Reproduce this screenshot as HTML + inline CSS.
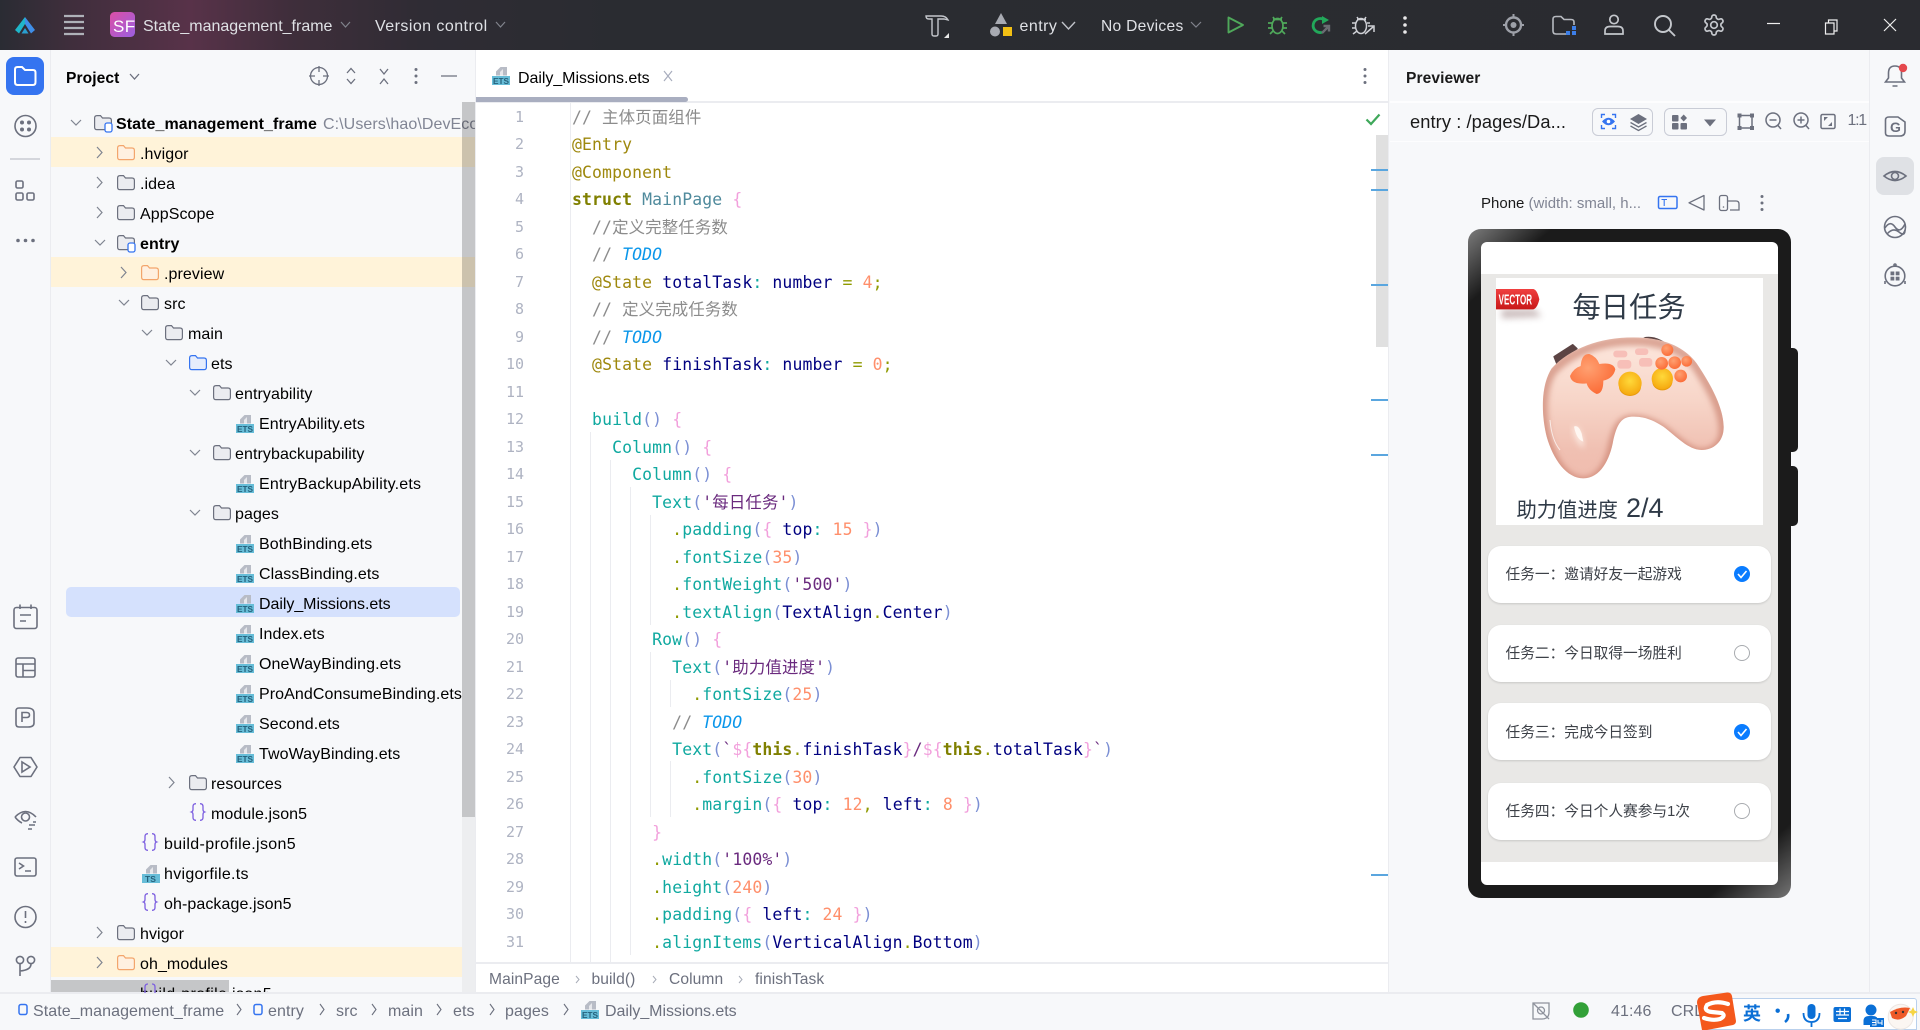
<!DOCTYPE html>
<html><head><meta charset="utf-8"><style>
*{box-sizing:border-box}
html,body{margin:0;padding:0;width:1920px;height:1030px;overflow:hidden;background:#f7f8fa}
body{position:relative;font-family:"Liberation Sans","Noto Sans CJK SC",sans-serif;font-size:16px;color:#000}
.b{position:absolute}
.t{position:absolute;white-space:nowrap;line-height:30px;height:30px;font-size:16px;letter-spacing:.08px;margin-top:2px}
.b .t{margin-top:2.5px}
.code{position:absolute;left:572px;top:103.5px;width:800px;height:859px;overflow:hidden;font-family:"DejaVu Sans Mono","Noto Sans CJK SC",monospace;font-size:16.45px;letter-spacing:.12px}
.code div{height:27.5px;line-height:27.5px;white-space:pre}
.ln{position:absolute;left:490px;top:103.5px;width:34px;text-align:right;font-family:"DejaVu Sans Mono",monospace;font-size:15px;color:#aeb3c2}
.ln div{height:27.5px;line-height:27.5px}
.ig{position:absolute;width:1px;background:#ebecf0}
.c{color:#8c8c8c}.a{color:#9e880d}.k{color:#808000;font-weight:bold}.m{color:#4f8a9c}.w{color:#f2a0dc}.v{color:#000080}.o{color:#8f9a00}.n{color:#ff8f6b}.f{color:#10a9a0}.p{color:#7b8fd4}.s{color:#6a2a7e}.d{color:#0a96ea;font-style:italic}.q{color:#10a9a0}
.card{position:absolute;left:1488px;width:283px;height:57px;background:#fff;border-radius:13px;box-shadow:0 1px 2px rgba(0,0,0,.14)}
.card span{position:absolute;left:17.5px;top:1px;line-height:56px;font-size:14.7px;color:#3d4148;white-space:nowrap}
</style></head><body>

<!-- title bar -->
<div class="b" style="left:0;top:0;width:1920px;height:50px;background:linear-gradient(90deg,#2a2c33 0,#3f2e3c 70px,#583249 190px,#3f2e3b 290px,#2f2c34 420px,#2a2c31 620px,#2a2b30 100%)"></div>
<div class="b" style="left:110px;top:12px;width:25px;height:25px;border-radius:4.5px;background:linear-gradient(135deg,#dc4fa6,#9a5fe0)"></div>
<div class="t" style="left:143px;top:10px;color:#dfe1e5;letter-spacing:0">State_management_frame</div>
<div class="t" style="left:375px;top:10px;color:#dfe1e5;letter-spacing:.45px">Version control</div>
<div class="t" style="left:1019.5px;top:10px;color:#dfe1e5;letter-spacing:.45px">entry</div>
<div class="t" style="left:1101px;top:10px;color:#dfe1e5;font-size:15.6px;letter-spacing:.28px">No Devices</div>
<div class="t" style="left:113px;top:9.5px;color:#fff;font-size:17px;letter-spacing:.4px">SF</div>

<!-- left toolbar -->
<div class="b" style="left:50px;top:50px;width:1px;height:943px;background:#ebecf0"></div>
<div class="b" style="left:6px;top:57px;width:38px;height:38px;background:#3574f0;border-radius:8px"></div>
<div class="b" style="left:10px;top:158px;width:30px;height:1.5px;background:#d4d6dc"></div>

<!-- project panel -->
<div class="t" style="left:66px;top:62px;font-weight:bold;font-size:15.6px">Project</div>

<div class="b" style="left:51px;top:137px;width:424px;height:30px;background:#fff3d9"></div>
<div class="b" style="left:51px;top:257px;width:424px;height:30px;background:#fff3d9"></div>
<div class="b" style="left:51px;top:947px;width:424px;height:30px;background:#fff3d9"></div>
<div class="b" style="left:66px;top:587px;width:394px;height:30px;background:#d5e1fd;border-radius:5px"></div>

<div class="b" style="left:51px;top:107px;width:424px;height:886px;overflow:hidden">
<div class="t" style="left:65px;top:0;font-weight:bold;font-size:16px">State_management_frame</div>
<div class="t" style="left:272px;top:0;color:#818594;font-size:16px">C:\Users\hao\DevEco</div>
<div class="t" style="left:89px;top:30px">.hvigor</div>
<div class="t" style="left:89px;top:60px">.idea</div>
<div class="t" style="left:89px;top:90px">AppScope</div>
<div class="t" style="left:89px;top:120px;font-weight:bold">entry</div>
<div class="t" style="left:113px;top:150px">.preview</div>
<div class="t" style="left:113px;top:180px">src</div>
<div class="t" style="left:137px;top:210px">main</div>
<div class="t" style="left:160px;top:240px">ets</div>
<div class="t" style="left:184px;top:270px">entryability</div>
<div class="t" style="left:208px;top:300px">EntryAbility.ets</div>
<div class="t" style="left:184px;top:330px">entrybackupability</div>
<div class="t" style="left:208px;top:360px;letter-spacing:.19px">EntryBackupAbility.ets</div>
<div class="t" style="left:184px;top:390px">pages</div>
<div class="t" style="left:208px;top:420px">BothBinding.ets</div>
<div class="t" style="left:208px;top:450px">ClassBinding.ets</div>
<div class="t" style="left:208px;top:480px;letter-spacing:-.05px">Daily_Missions.ets</div>
<div class="t" style="left:208px;top:510px">Index.ets</div>
<div class="t" style="left:208px;top:540px">OneWayBinding.ets</div>
<div class="t" style="left:208px;top:570px">ProAndConsumeBinding.ets</div>
<div class="t" style="left:208px;top:600px">Second.ets</div>
<div class="t" style="left:208px;top:630px">TwoWayBinding.ets</div>
<div class="t" style="left:160px;top:660px">resources</div>
<div class="t" style="left:160px;top:690px">module.json5</div>
<div class="t" style="left:113px;top:720px;letter-spacing:.35px">build-profile.json5</div>
<div class="t" style="left:113px;top:750px;letter-spacing:.3px">hvigorfile.ts</div>
<div class="t" style="left:113px;top:780px">oh-package.json5</div>
<div class="t" style="left:89px;top:810px">hvigor</div>
<div class="t" style="left:89px;top:840px">oh_modules</div>
<div class="t" style="left:89px;top:870px;letter-spacing:.35px">build-profile.json5</div>
</div>
<div class="b" style="left:462px;top:102px;width:13px;height:715px;background:rgba(0,0,0,.2)"></div>
<div class="b" style="left:462px;top:817px;width:13px;height:176px;background:#edeef0"></div>
<div class="b" style="left:51px;top:980px;width:178px;height:13px;background:rgba(0,0,0,.2)"></div>

<!-- editor -->
<div class="b" style="left:475px;top:50px;width:914px;height:943px;background:#fff;border-left:1px solid #ebecf0;border-right:1px solid #ebecf0"></div>
<div class="b" style="left:476px;top:101px;width:912px;height:1.5px;background:#ebecf0"></div>
<div class="b" style="left:476px;top:97px;width:212px;height:5px;background:#a9aec0;border-radius:0 3px 3px 0"></div>
<div class="t" style="left:518px;top:62px;color:#000;letter-spacing:-.05px">Daily_Missions.ets</div>

<div class="ig" style="left:570px;top:103px;height:859px"></div>
<div class="ig" style="left:590px;top:432px;height:530px"></div>
<div class="ig" style="left:610px;top:460px;height:502px"></div>
<div class="ig" style="left:630px;top:487px;height:468px"></div>
<div class="ig" style="left:650px;top:515px;height:110px"></div>
<div class="ig" style="left:650px;top:652px;height:165px"></div>
<div class="ig" style="left:670px;top:680px;height:27px"></div>
<div class="ig" style="left:670px;top:761px;height:56px"></div>

<div class="ln"><div>1</div><div>2</div><div>3</div><div>4</div><div>5</div><div>6</div><div>7</div><div>8</div><div>9</div><div>10</div><div>11</div><div>12</div><div>13</div><div>14</div><div>15</div><div>16</div><div>17</div><div>18</div><div>19</div><div>20</div><div>21</div><div>22</div><div>23</div><div>24</div><div>25</div><div>26</div><div>27</div><div>28</div><div>29</div><div>30</div><div>31</div></div>

<div class="code">
<div class="c">// 主体页面组件</div>
<div class="a">@Entry</div>
<div class="a">@Component</div>
<div><span class="k">struct</span> <span class="m">MainPage</span> <span class="w">{</span></div>
<div class="c">  //定义完整任务数</div>
<div>  <span class="c">// </span><span class="d">TODO</span></div>
<div>  <span class="a">@State</span> <span class="v">totalTask</span><span class="q">:</span> <span class="v">number</span> <span class="o">=</span> <span class="n">4</span><span class="o">;</span></div>
<div class="c">  // 定义完成任务数</div>
<div>  <span class="c">// </span><span class="d">TODO</span></div>
<div>  <span class="a">@State</span> <span class="v">finishTask</span><span class="q">:</span> <span class="v">number</span> <span class="o">=</span> <span class="n">0</span><span class="o">;</span></div>
<div></div>
<div>  <span class="f">build</span><span class="p">()</span> <span class="w">{</span></div>
<div>    <span class="f">Column</span><span class="p">()</span> <span class="w">{</span></div>
<div>      <span class="f">Column</span><span class="p">()</span> <span class="w">{</span></div>
<div>        <span class="f">Text</span><span class="p">(</span><span class="s">'每日任务'</span><span class="p">)</span></div>
<div>          <span class="o">.</span><span class="f">padding</span><span class="p">(</span><span class="w">{</span> <span class="v">top</span><span class="q">:</span> <span class="n">15</span> <span class="w">}</span><span class="p">)</span></div>
<div>          <span class="o">.</span><span class="f">fontSize</span><span class="p">(</span><span class="n">35</span><span class="p">)</span></div>
<div>          <span class="o">.</span><span class="f">fontWeight</span><span class="p">(</span><span class="s">'500'</span><span class="p">)</span></div>
<div>          <span class="o">.</span><span class="f">textAlign</span><span class="p">(</span><span class="v">TextAlign</span><span class="o">.</span><span class="v">Center</span><span class="p">)</span></div>
<div>        <span class="f">Row</span><span class="p">()</span> <span class="w">{</span></div>
<div>          <span class="f">Text</span><span class="p">(</span><span class="s">'助力值进度'</span><span class="p">)</span></div>
<div>            <span class="o">.</span><span class="f">fontSize</span><span class="p">(</span><span class="n">25</span><span class="p">)</span></div>
<div>          <span class="c">// </span><span class="d">TODO</span></div>
<div>          <span class="f">Text</span><span class="p">(</span><span class="s">`</span><span class="w">${</span><span class="k">this</span><span class="o">.</span><span class="v">finishTask</span><span class="w">}</span><span class="s">/</span><span class="w">${</span><span class="k">this</span><span class="o">.</span><span class="v">totalTask</span><span class="w">}</span><span class="s">`</span><span class="p">)</span></div>
<div>            <span class="o">.</span><span class="f">fontSize</span><span class="p">(</span><span class="n">30</span><span class="p">)</span></div>
<div>            <span class="o">.</span><span class="f">margin</span><span class="p">(</span><span class="w">{</span> <span class="v">top</span><span class="q">:</span> <span class="n">12</span><span class="o">,</span> <span class="v">left</span><span class="q">:</span> <span class="n">8</span> <span class="w">}</span><span class="p">)</span></div>
<div>        <span class="w">}</span></div>
<div>        <span class="o">.</span><span class="f">width</span><span class="p">(</span><span class="s">'100%'</span><span class="p">)</span></div>
<div>        <span class="o">.</span><span class="f">height</span><span class="p">(</span><span class="n">240</span><span class="p">)</span></div>
<div>        <span class="o">.</span><span class="f">padding</span><span class="p">(</span><span class="w">{</span> <span class="v">left</span><span class="q">:</span> <span class="n">24</span> <span class="w">}</span><span class="p">)</span></div>
<div>        <span class="o">.</span><span class="f">alignItems</span><span class="p">(</span><span class="v">VerticalAlign</span><span class="o">.</span><span class="v">Bottom</span><span class="p">)</span></div>
</div>

<!-- editor scrollbar -->
<div class="b" style="left:1376px;top:135px;width:12px;height:212px;background:#e0e0e0"></div>
<div class="b" style="left:1371px;top:169px;width:17px;height:2px;background:#5aa6df"></div>
<div class="b" style="left:1371px;top:189px;width:17px;height:2px;background:#5aa6df"></div>
<div class="b" style="left:1371px;top:284px;width:17px;height:2px;background:#5aa6df"></div>
<div class="b" style="left:1371px;top:399px;width:17px;height:2px;background:#5aa6df"></div>
<div class="b" style="left:1371px;top:454px;width:17px;height:2px;background:#5aa6df"></div>
<div class="b" style="left:1371px;top:874px;width:17px;height:2px;background:#5aa6df"></div>

<!-- breadcrumb -->
<div class="b" style="left:476px;top:962px;width:912px;height:1.5px;background:#ebecf0"></div>
<div class="t" style="left:489px;top:963px;color:#6c707e;font-size:15.6px">MainPage</div>
<div class="t" style="left:591.5px;top:963px;color:#6c707e;font-size:15.6px">build()</div>
<div class="t" style="left:669px;top:963px;color:#6c707e;font-size:15.6px">Column</div>
<div class="t" style="left:755px;top:963px;color:#6c707e;font-size:15.6px">finishTask</div>

<!-- previewer -->
<div class="t" style="left:1406px;top:62px;font-weight:bold;font-size:15.6px;color:#1a1a1a">Previewer</div>
<div class="b" style="left:1390px;top:101px;width:479px;height:1.5px;background:#fdfdfe"></div>
<div class="b" style="left:1390px;top:140.5px;width:479px;height:1.5px;background:#fdfdfe"></div>
<div class="t" style="left:1410px;top:105px;font-size:18.3px;color:#1a1a1a">entry : /pages/Da...</div>
<div class="b" style="left:1592px;top:108px;width:61px;height:28px;border:1px solid #c9ccd6;border-radius:6px"></div>
<div class="b" style="left:1664px;top:108px;width:63px;height:28px;border:1px solid #c9ccd6;border-radius:6px"></div>
<div class="t" style="left:1847.5px;top:104px;font-size:16px;color:#6c707e;letter-spacing:-1.3px">1:1</div>
<div class="t" style="left:1481px;top:187px;font-size:15px;color:#1a1a1a;letter-spacing:0">Phone <span style="color:#818594">(width: small, h...</span></div>
<div class="b" style="left:1869px;top:50px;width:1px;height:943px;background:#ebecf0"></div>
<div class="b" style="left:1876px;top:157px;width:38px;height:38px;background:#dfe1e5;border-radius:8px"></div>

<!-- phone -->
<div class="b" style="left:1791px;top:348px;width:7px;height:104px;background:#1b1b1b;border-radius:0 5px 5px 0"></div>
<div class="b" style="left:1791px;top:466px;width:7px;height:60px;background:#1b1b1b;border-radius:0 5px 5px 0"></div>
<div class="b" style="left:1468px;top:229px;width:323px;height:669px;border-radius:13px;background:linear-gradient(138deg,#7c7c7c 0,#1b1b1b 56px,#1b1b1b calc(100% - 56px),#747474 100%)"></div>
<div class="b" style="left:1481px;top:242px;width:297px;height:643px;background:#fff;border-radius:6px;overflow:hidden">
  <div class="b" style="left:0;top:32px;width:297px;height:588px;background:#e9e8e6"></div>
  <div class="b" style="left:15px;top:36px;width:267px;height:247px;background:#fff"></div>
</div>
<div class="t" style="left:1572.5px;top:285px;height:40px;line-height:40px;font-size:28.3px;color:#2f3a47;letter-spacing:0">每日任务</div>
<div class="t" style="left:1516.5px;top:493px;height:32px;line-height:32px;font-size:20.3px;color:#2f3a47;letter-spacing:0">助力值进度</div>
<div class="t" style="left:1626px;top:489px;height:34px;line-height:34px;font-size:27px;color:#2f3a47;letter-spacing:0">2/4</div>
<div class="card" style="top:546px"><span>任务一：邀请好友一起游戏</span></div>
<div class="card" style="top:625px"><span>任务二：今日取得一场胜利</span></div>
<div class="card" style="top:703px"><span style="top:2px">任务三：完成今日签到</span></div>
<div class="card" style="top:783px"><span>任务四：今日个人赛参与1次</span></div>

<!-- status bar -->
<div class="b" style="left:0;top:992px;width:1920px;height:1.5px;background:#ebecf0"></div>
<div class="t" style="left:33px;top:995px;color:#6c707e">State_management_frame</div>
<div class="t" style="left:268px;top:995px;color:#6c707e">entry</div>
<div class="t" style="left:336px;top:995px;color:#6c707e">src</div>
<div class="t" style="left:388px;top:995px;color:#6c707e">main</div>
<div class="t" style="left:453px;top:995px;color:#6c707e">ets</div>
<div class="t" style="left:505px;top:995px;color:#6c707e">pages</div>
<div class="t" style="left:605px;top:995px;color:#6c707e;letter-spacing:-.05px">Daily_Missions.ets</div>
<div class="t" style="left:1611px;top:995px;color:#6c707e">41:46</div>
<div class="t" style="left:1671px;top:995px;color:#6c707e">CRL</div>

<!-- sogou -->
<div class="b" style="left:1705px;top:998px;width:212px;height:32px;background:#fff;border:1px solid #b9d0ec;border-radius:3px 3px 0 0"></div>
<div class="t" style="left:1743px;top:997px;color:#0a6fd6;font-weight:bold;font-size:18px;letter-spacing:0;height:28px;line-height:30px">英</div>

<!-- icon layer -->
<svg class="b" style="left:0;top:0;pointer-events:none" width="1920" height="1030" viewBox="0 0 1920 1030" xmlns="http://www.w3.org/2000/svg" fill="none">
<defs>
<g id="fo"><path d="M.6 3Q.6.6 3 .6H6.5L8.5 3H15Q17.4 3 17.4 5.4V12.2Q17.4 14.6 15 14.6H3Q.6 14.6.6 12.2Z" stroke-width="1.2"/></g>
<g id="cr"><path d="M0 0L5 5.5L0 11" stroke="#7f8490" stroke-width="1.2" fill="none"/></g>
<g id="cd"><path d="M0 0L5 5L10 0" stroke="#7f8490" stroke-width="1.2" fill="none"/></g>
<g id="et"><path d="M4 8.5V4.5L8.5 0H15V8.5Z" fill="#b8bcc6"/><path d="M8 8.5V5L11 2V8.5Z" fill="#e6e7eb"/><rect x="0" y="9" width="18" height="9" fill="#67bdd8"/></g>
<g id="js"><path d="M5 .7Q2 .7 2 3.5V6.5Q2 8.5 .5 9Q2 9.5 2 11.5V14.5Q2 17.3 5 17.3M9 .7Q12 .7 12 3.5V6.5Q12 8.5 13.5 9Q12 9.5 12 11.5V14.5Q12 17.3 9 17.3" stroke="#7d5fe0" stroke-width="1.3" fill="none"/></g>
</defs>

<!-- titlebar icons -->
<path d="M25 17L15 30L19 33.500L25 24Z" fill="#1fb6c9"/><path d="M25 17L35 30L31 33.500L25 24Z" fill="#3f8ee8"/><path d="M21.500 33.500H28.500L25 28Z" fill="#2a9fd0"/>
<path d="M64 16H84M64 22H84M64 28H84M64 34H84" stroke="#aeb1b8" stroke-width="2.2"/>
<g stroke="#80838c" stroke-width="1.2"><path d="M341 22L345.5 27L350 22M496 22L500.5 27L505 22"/><path d="M1191 22L1196 27L1201 22"/></g>
<path d="M1062 22L1068.5 29L1075 22" stroke="#c0c3c9" stroke-width="1.4"/>
<path d="M926 16H941Q946 16 948 20L944 19H938V34Q938 36 936 36H934Q932 36 932 34V19H929Q926 19 926 16Z" stroke="#c4c7cc" stroke-width="1.4"/><path d="M949 38V33L944 38Z" fill="#e8e8e8"/>
<path d="M1001 13L1007 24H995Z" fill="#a8abb2"/><circle cx="995" cy="31.5" r="5" fill="#a8abb2"/><rect x="1003" y="27" width="9" height="9" fill="#f2c014"/>
<path d="M1228.5 17.5L1243 25L1228.5 32.5Z" stroke="#4fa85a" stroke-width="1.9" stroke-linejoin="round"/>
<g stroke="#4fa85a" stroke-width="1.7"><ellipse cx="1277.5" cy="26" rx="5.5" ry="7.5"/><path d="M1273 17L1275 20M1282 17L1280 20M1273 19.5H1282M1268 23H1272M1283 23H1287M1268 28H1272M1283 28H1287M1270 34L1273 31M1285 34L1282 31"/></g>
<path d="M1325 20.500A7 7 0 1 0 1322 32.300" stroke="#22a85a" stroke-width="2.800"/><path d="M1322 16L1329 20L1322 24Z" fill="#22a85a"/><path d="M1322 33L1328 27M1323.500 26H1329V31.500" stroke="#6a6c72" stroke-width="2.400"/>
<g stroke="#cfd1d6" stroke-width="1.5"><ellipse cx="1361" cy="26" rx="5.5" ry="7.5"/><path d="M1357 17L1359 20M1366 17L1364 20M1357 19.5H1366M1352 23H1356M1367 23H1370M1352 28H1356M1353 34L1357 31M1365 34L1373 27M1368 26H1374V32"/></g>
<g fill="#e8e8e8"><circle cx="1405" cy="18" r="1.8"/><circle cx="1405" cy="25" r="1.8"/><circle cx="1405" cy="32" r="1.8"/></g>
<circle cx="1513.5" cy="25" r="7.5" stroke="#9da0a8" stroke-width="2.4"/><circle cx="1513.5" cy="25" r="3" fill="#9da0a8"/><path d="M1513.5 14V17M1513.5 33V36M1503 25H1506M1521 25H1524" stroke="#9da0a8" stroke-width="2"/>
<path d="M1566 34H1556Q1553 34 1553 31V19Q1553 16.5 1556 16.5H1561L1564 19.5H1571Q1574 19.5 1574 22V25" stroke="#b7bac0" stroke-width="1.6"/><g fill="#3d7fe8"><rect x="1572" y="26" width="4" height="4"/><rect x="1566" y="31" width="4" height="4"/><rect x="1572" y="31" width="4" height="4"/></g>
<circle cx="1614" cy="19.5" r="4.2" stroke="#c4c7cc" stroke-width="1.7"/><path d="M1605 34V31Q1605 26.5 1610 26.5H1618Q1623 26.5 1623 31V34Z" stroke="#c4c7cc" stroke-width="1.7"/>
<circle cx="1663" cy="24" r="8" stroke="#c4c7cc" stroke-width="1.9"/><path d="M1669 30L1675 36" stroke="#c4c7cc" stroke-width="1.9"/>
<g transform="translate(1702 13)" stroke="#c4c7cc" stroke-width="1.700"><path d="M12.22 2h-.44a2 2 0 0 0-2 2v.18a2 2 0 0 1-1 1.73l-.43.25a2 2 0 0 1-2 0l-.15-.08a2 2 0 0 0-2.73.73l-.22.38a2 2 0 0 0 .73 2.73l.15.1a2 2 0 0 1 1 1.72v.51a2 2 0 0 1-1 1.74l-.15.09a2 2 0 0 0-.73 2.73l.22.38a2 2 0 0 0 2.73.73l.15-.08a2 2 0 0 1 2 0l.43.25a2 2 0 0 1 1 1.73V20a2 2 0 0 0 2 2h.44a2 2 0 0 0 2-2v-.18a2 2 0 0 1 1-1.73l.43-.25a2 2 0 0 1 2 0l.15.08a2 2 0 0 0 2.73-.73l.22-.39a2 2 0 0 0-.73-2.73l-.15-.08a2 2 0 0 1-1-1.74v-.5a2 2 0 0 1 1-1.74l.15-.09a2 2 0 0 0 .73-2.73l-.22-.38a2 2 0 0 0-2.73-.73l-.15.08a2 2 0 0 1-2 0l-.43-.25a2 2 0 0 1-1-1.73V4a2 2 0 0 0-2-2z"/><circle cx="12" cy="12" r="3.300"/></g>
<path d="M1767 23.5H1780" stroke="#eee" stroke-width="1.2"/>
<path d="M1825.5 23H1834V34H1825.5ZM1828.5 23V20H1837V31H1834" stroke="#eee" stroke-width="1.2"/>
<path d="M1884 19L1896 31M1896 19L1884 31" stroke="#eee" stroke-width="1.2"/>

<!-- left bar icons -->
<path d="M15 69.5Q15 67 17.5 67H22L25 70H33Q35.5 70 35.5 72.5V82Q35.5 85 33 85H17.5Q15 85 15 82Z" stroke="#fff" stroke-width="2"/>
<g stroke="#6c707e" stroke-width="1.6">
<circle cx="25.5" cy="126" r="10.5"/>
<rect x="16" y="181" width="7" height="7" rx="1.5"/><rect x="16" y="193" width="7" height="7" rx="1.5"/><rect x="27" y="193" width="7" height="7" rx="1.5"/>
<rect x="14" y="607.5" width="23" height="21" rx="2.5"/><path d="M20 604.5V609M31 604.5V609M20 615H31M20 621H26"/>
<rect x="16" y="658" width="19" height="19" rx="2"/><path d="M16 664H35M23 664V677M23 670.5H35"/>
<path d="M19 708H27Q34 708 34 713V723Q34 727 28 727H19Q16 727 16 724V711Q16 708 19 708Z"/><path d="M22 722V712.5H26.5Q29.5 712.5 29.5 715T26.5 717.5H22"/>
<path d="M20 757.5H31L37 767L31 776.5H20L14 767Z" stroke-linejoin="round"/><path d="M22 762V772L30 767Z"/>
<path d="M15 817Q25.5 806 36 817M15 817Q18 821 22 823M33 822H36M29 825H35M28 829H32"/><circle cx="25.5" cy="817" r="4"/>
<rect x="15" y="858" width="21" height="18" rx="2"/><path d="M19 863L23.5 866L19 869M25 871H31"/>
<circle cx="25.5" cy="917" r="10.5"/><path d="M25.5 911V918M25.5 921V923"/>
<circle cx="20" cy="960" r="3.6"/><circle cx="31" cy="960" r="3.6"/><path d="M20 964V976M31 964Q31 970 20 971"/>
</g>
<g fill="#6c707e"><circle cx="22" cy="122.5" r="2"/><circle cx="29" cy="122.5" r="2"/><circle cx="22" cy="129.5" r="2"/><circle cx="29" cy="129.5" r="2"/><circle cx="18" cy="240.5" r="1.8"/><circle cx="25.5" cy="240.5" r="1.8"/><circle cx="33" cy="240.5" r="1.8"/></g>

<!-- project header icons -->
<g stroke="#6c707e" stroke-width="1.3"><circle cx="319" cy="76" r="8.5"/><path d="M319 66V72M319 80V86M309 76H315M323 76H329"/><path d="M347 73L351 68.500L355 73M347 79L351 83.500L355 79M380 69L384 74L388 69M380 84L384 79L388 84M441 76H457"/><path d="M130 74L134.500 79L139 74"/></g>
<g fill="#6c707e"><circle cx="416" cy="69.500" r="1.500"/><circle cx="416" cy="76" r="1.500"/><circle cx="416" cy="82.500" r="1.500"/></g>

<!-- tree icons -->
<g fill="#ebecf0" stroke="#6c707e">
<use href="#fo" x="94" y="115"/><use href="#fo" x="117" y="175"/><use href="#fo" x="117" y="205"/><use href="#fo" x="117" y="235"/>
<use href="#fo" x="141" y="295"/><use href="#fo" x="165" y="325"/><use href="#fo" x="213" y="385"/><use href="#fo" x="213" y="445"/><use href="#fo" x="213" y="505"/>
<use href="#fo" x="189" y="775"/><use href="#fo" x="117" y="925"/>
</g>
<g fill="#fff0e0" stroke="#f3a56c"><use href="#fo" x="117" y="145"/><use href="#fo" x="141" y="265"/><use href="#fo" x="117" y="955"/></g>
<g fill="#e6edfc" stroke="#3574f0"><use href="#fo" x="189" y="355"/></g>
<g fill="#fff" stroke="#3574f0" stroke-width="1.3"><rect x="105" y="123" width="7" height="9" rx="2"/><rect x="128" y="243" width="7" height="9" rx="2"/></g>
<use href="#cd" x="71" y="120"/><use href="#cd" x="95" y="240"/><use href="#cd" x="119" y="300"/><use href="#cd" x="142" y="330"/><use href="#cd" x="166" y="360"/><use href="#cd" x="190" y="390"/><use href="#cd" x="190" y="450"/><use href="#cd" x="190" y="510"/>
<use href="#cr" x="97" y="147"/><use href="#cr" x="97" y="177"/><use href="#cr" x="97" y="207"/><use href="#cr" x="121" y="267"/><use href="#cr" x="169" y="777"/><use href="#cr" x="97" y="927"/><use href="#cr" x="97" y="957"/>
<g>
<use href="#et" x="236" y="415"/><use href="#et" x="236" y="475"/><use href="#et" x="236" y="535"/><use href="#et" x="236" y="565"/><use href="#et" x="236" y="595"/><use href="#et" x="236" y="625"/><use href="#et" x="236" y="655"/><use href="#et" x="236" y="685"/><use href="#et" x="236" y="715"/><use href="#et" x="236" y="745"/>
<use href="#et" x="142" y="865"/><use href="#et" x="492" y="67"/><use href="#et" x="581" y="1001"/>
</g>
<g font-family="Liberation Sans,sans-serif" font-size="8.500" font-weight="bold" fill="#25607a">
<text x="237" y="432" textLength="16" lengthAdjust="spacingAndGlyphs">ETS</text><text x="237" y="492" textLength="16" lengthAdjust="spacingAndGlyphs">ETS</text><text x="237" y="552" textLength="16" lengthAdjust="spacingAndGlyphs">ETS</text><text x="237" y="582" textLength="16" lengthAdjust="spacingAndGlyphs">ETS</text><text x="237" y="612" textLength="16" lengthAdjust="spacingAndGlyphs">ETS</text><text x="237" y="642" textLength="16" lengthAdjust="spacingAndGlyphs">ETS</text><text x="237" y="672" textLength="16" lengthAdjust="spacingAndGlyphs">ETS</text><text x="237" y="702" textLength="16" lengthAdjust="spacingAndGlyphs">ETS</text><text x="237" y="732" textLength="16" lengthAdjust="spacingAndGlyphs">ETS</text><text x="237" y="762" textLength="16" lengthAdjust="spacingAndGlyphs">ETS</text>
<text x="145" y="882">TS</text><text x="493" y="84" textLength="16" lengthAdjust="spacingAndGlyphs">ETS</text><text x="582" y="1018" textLength="16" lengthAdjust="spacingAndGlyphs">ETS</text>
</g>
<use href="#js" x="191" y="803"/><use href="#js" x="143" y="833"/><use href="#js" x="143" y="893"/>
<g><path d="M148 984Q145 984 145 987V993M152 984Q155 984 155 987V993" stroke="#7d5fe0" stroke-width="1.300"/></g>

<!-- editor icons -->
<path d="M664 71L672 81M672 71L664 81" stroke="#a8adbd" stroke-width="1.2"/>
<g fill="#6c707e"><circle cx="1365" cy="69.500" r="1.500"/><circle cx="1365" cy="76" r="1.500"/><circle cx="1365" cy="82.500" r="1.500"/></g>
<path d="M1366.500 119.500L1371 124L1379.500 114.500" stroke="#3fa85a" stroke-width="2.200"/>
<g stroke="#a8adb8" stroke-width="1"><path d="M576 976L579 979.500L576 983M653 976L656 979.500L653 983M739 976L742 979.500L739 983"/></g>

<!-- previewer icons -->
<g stroke="#3574f0" stroke-width="1.400"><path d="M1601.500 118V114.500H1605M1612 114.500H1615.500V118M1601.500 125V128.500H1605M1612 128.500H1615.500V125"/></g>
<path d="M1602 121.500Q1608.500 114 1615 121.500Q1608.500 129 1602 121.500Z" fill="#3574f0"/><circle cx="1608.500" cy="121.500" r="1.800" fill="#fff"/>
<path d="M1638.500 114L1647 119L1638.500 124L1630 119Z" fill="#6c707e"/><path d="M1630.500 122.500L1638.500 127L1646.500 122.500M1630.500 126L1638.500 130.500L1646.500 126" stroke="#6c707e" stroke-width="1.300"/>
<g fill="#6c707e"><rect x="1672" y="115" width="6.500" height="6.500" rx="1"/><rect x="1672" y="123" width="6.500" height="6.500" rx="1"/><rect x="1680.500" y="123" width="6.500" height="6.500" rx="1"/><path d="M1683.700 114.500L1687 118L1683.700 121.500L1680.400 118Z"/><path d="M1704 119.500H1716L1710 126.500Z"/></g>
<g stroke="#6c707e" stroke-width="1.500"><rect x="1739.500" y="115.500" width="12.500" height="12.500"/><circle cx="1773" cy="120" r="7"/><path d="M1769.500 120H1776.500M1778 125.500L1781 129"/><circle cx="1801" cy="120" r="7"/><path d="M1797.500 120H1804.500M1801 116.500V123.500M1806 125.500L1809 129"/><rect x="1821" y="114.500" width="14" height="14" rx="1.500"/></g>
<g fill="#6c707e"><rect x="1737.500" y="113.500" width="4" height="4"/><rect x="1750" y="113.500" width="4" height="4"/><rect x="1737.500" y="126" width="4" height="4"/><rect x="1750" y="126" width="4" height="4"/><path d="M1824 117H1828L1824 121ZM1832 126H1828L1832 122Z"/></g>
<rect x="1658.500" y="196.500" width="18.500" height="12" rx="1.500" stroke="#3574f0" stroke-width="1.500"/><path d="M1661.500 199.500H1667M1664.200 199.500V206" stroke="#3574f0" stroke-width="1.100"/>
<path d="M1704 195.500V210L1689 202.800Z" stroke="#6c707e" stroke-width="1.300" stroke-linejoin="round"/>
<rect x="1719.500" y="195.500" width="8" height="15" rx="2" stroke="#6c707e" stroke-width="1.300"/><path d="M1728 201H1736Q1739 201 1739 204V210H1730" stroke="#6c707e" stroke-width="1.300"/><circle cx="1723.500" cy="207" r=".8" fill="#6c707e"/>
<g fill="#6c707e"><circle cx="1762" cy="196.500" r="1.500"/><circle cx="1762" cy="203" r="1.500"/><circle cx="1762" cy="209.500" r="1.500"/></g>

<!-- right bar icons -->
<g stroke="#6c707e" stroke-width="1.600">
<path d="M1885.500 82H1904.500L1901.500 78V73Q1901.500 66 1895 66Q1888.500 66 1888.500 73V78ZM1892.500 86H1897.500"/>
<path d="M1889 117H1898L1905 122V131Q1905 136 1900 136H1889Q1885.500 136 1885.500 133V120Q1885.500 117 1889 117Z"/>
<path d="M1884 176Q1895 167 1906 176Q1895 185 1884 176Z"/><circle cx="1895" cy="176" r="3.500"/>
<circle cx="1895" cy="227" r="10.500"/><path d="M1885 228Q1890 220 1895 227T1905 224M1887 234Q1893 227 1899 232T1905 230"/>
<circle cx="1895" cy="276" r="9.800"/><circle cx="1895" cy="265" r="1"/><path d="M1885 281V284M1905 281V284"/>
</g>
<circle cx="1903" cy="68" r="4.200" fill="#e5484d"/>
<text x="1890" y="132" font-family="Liberation Sans,sans-serif" font-size="14" font-weight="bold" fill="#6c707e">G</text>
<g fill="#6c707e"><rect x="1890.500" y="271.500" width="3.800" height="3.800"/><rect x="1895.700" y="271.500" width="3.800" height="3.800"/><rect x="1890.500" y="276.700" width="3.800" height="3.800"/><rect x="1895.700" y="276.700" width="3.800" height="3.800"/></g>

<!-- status icons -->
<g stroke="#3574f0" stroke-width="1.500" fill="none"><rect x="19" y="1004.500" width="8" height="10" rx="2"/><rect x="254" y="1004.500" width="8" height="10" rx="2"/></g>
<g stroke="#6c707e" stroke-width="1.100"><path d="M237 1004L241 1009.500L237 1015M320 1004L324 1009.500L320 1015M372 1004L376 1009.500L372 1015M437 1004L441 1009.500L437 1015M490 1004L494 1009.500L490 1015M564 1004L568 1009.500L564 1015"/></g>
<g stroke="#8e929c" stroke-width="1.300"><path d="M1533 1003H1549V1012Q1549 1019 1542 1019H1533Z"/><path d="M1533 1003L1549 1019"/><circle cx="1541" cy="1010.500" r="3.500"/></g>
<circle cx="1581" cy="1010" r="7.800" fill="#32a038"/>

<!-- phone art -->
<g transform="translate(1440 220) scale(.33333)">
<defs>
<linearGradient id="bd" x1="0" y1="0" x2="0" y2="1"><stop offset="0" stop-color="#fde8de"/><stop offset=".45" stop-color="#f7d5c8"/><stop offset=".8" stop-color="#f0c0b2"/><stop offset="1" stop-color="#efbcae"/></linearGradient>
<radialGradient id="yl" cx=".5" cy=".4" r=".6"><stop offset="0" stop-color="#ffd93a"/><stop offset="1" stop-color="#f6a90f"/></radialGradient>
<radialGradient id="or" cx=".4" cy=".35" r=".7"><stop offset="0" stop-color="#ffa071"/><stop offset="1" stop-color="#fb6a35"/></radialGradient>
<linearGradient id="rd" x1="0" y1="0" x2="0" y2="1"><stop offset="0" stop-color="#f04040"/><stop offset="1" stop-color="#c81818"/></linearGradient>
<filter id="bl" x="-30%" y="-60%" width="160%" height="240%"><feGaussianBlur stdDeviation="10"/></filter>
<filter id="bl2" x="-30%" y="-30%" width="160%" height="160%"><feGaussianBlur stdDeviation="9"/></filter>
<clipPath id="bc"><path d="M335 445C390 385 480 352 580 352C660 352 730 375 770 430C810 490 850 560 851 620C852 665 820 690 785 690C745 690 710 650 670 620C640 600 610 588 575 590C540 592 530 620 520 660C510 720 480 775 430 775C380 775 340 720 320 650C305 590 300 500 335 445Z"/></clipPath>
</defs>
<path d="M185 268H285L305 290L185 295Z" fill="#8a6b6b" opacity=".45" filter="url(#bl)"/>
<path d="M168 207H280Q292 210 298 238Q292 264 280 268H168Z" fill="url(#rd)"/>
<text x="176" y="254" font-family="Liberation Sans,sans-serif" font-weight="bold" font-size="44" fill="#fff" textLength="100" lengthAdjust="spacingAndGlyphs">VECTOR</text>
<path d="M342 410L398 374L411 386L350 430Z" fill="#5c4444" stroke="#5c4444" stroke-width="4" stroke-linejoin="round"/>
<path d="M610 352Q640 345 672 365L640 365Z" fill="#5c4444"/>
<path d="M335 445C390 385 480 352 580 352C660 352 730 375 770 430C810 490 850 560 851 620C852 665 820 690 785 690C745 690 710 650 670 620C640 600 610 588 575 590C540 592 530 620 520 660C510 720 480 775 430 775C380 775 340 720 320 650C305 590 300 500 335 445Z" fill="url(#bd)"/>
<g clip-path="url(#bc)"><path d="M335 445C390 385 480 352 580 352C660 352 730 375 770 430C810 490 850 560 851 620C852 665 820 690 785 690C745 690 710 650 670 620C640 600 610 588 575 590C540 592 530 620 520 660C510 720 480 775 430 775C380 775 340 720 320 650C305 590 300 500 335 445Z" transform="translate(0 10)" stroke="#c47866" stroke-opacity=".6" stroke-width="30" fill="none" filter="url(#bl2)"/></g>
<path d="M398 622Q416 608 430 660L432 685Q405 670 398 622Z" fill="#fff6f0" opacity=".7" filter="url(#bl2)"/>
<path d="M402 620Q415 612 425 640L430 665Q410 660 402 620Z" fill="#fff9f5" opacity=".9"/>
<path d="M330 600Q335 660 360 690" stroke="#fff" stroke-opacity=".7" stroke-width="3" fill="none"/>
<path d="M390 468Q400 445 422 438Q425 400 448 402Q470 410 478 432Q520 425 526 448Q520 475 490 482Q490 520 470 522Q445 510 440 490Q395 495 390 468Z" fill="url(#or)"/>
<g fill="#f7bfb8"><rect x="520" y="392" width="42" height="20" rx="9"/><rect x="585" y="385" width="40" height="20" rx="9"/><rect x="532" y="420" width="42" height="26" rx="10"/><rect x="597" y="414" width="40" height="26" rx="10"/></g>
<ellipse cx="570" cy="500" rx="33" ry="28" fill="#e89a0a"/><circle cx="570" cy="490" r="35" fill="url(#yl)"/>
<ellipse cx="667" cy="486" rx="30" ry="25" fill="#e89a0a"/><circle cx="667" cy="476" r="32" fill="url(#yl)"/>
<g fill="url(#or)"><circle cx="682" cy="390" r="18"/><circle cx="665" cy="430" r="19"/><circle cx="704" cy="428" r="19"/><circle cx="740" cy="424" r="16"/><circle cx="722" cy="468" r="19"/></g>
</g>
<g fill="#0a7cff"><circle cx="1742" cy="574" r="8"/><circle cx="1742" cy="732" r="8"/></g>
<path d="M1738 574L1741 577.500L1746.500 571M1738 732L1741 735.500L1746.500 729" stroke="#fff" stroke-width="1.600"/>
<g stroke="#a8abaf" stroke-width="1"><circle cx="1742" cy="653" r="7.500"/><circle cx="1742" cy="811" r="7.500"/></g>

<!-- sogou icons -->
<path d="M1703 996L1727 992.500Q1731 992 1732 996L1736 1021Q1736 1024 1733 1025L1707 1030H1702L1697 1003Q1697 997 1703 996Z" fill="#f4581c"/>
<path d="M1728 1004Q1716 1000 1707 1005Q1703 1011 1712 1012L1722 1013Q1726 1016 1720 1019Q1713 1021 1704 1018" stroke="#fff" stroke-width="4.200" stroke-linecap="round"/>
<circle cx="1777.700" cy="1010.700" r="2.200" fill="#0a6fd6"/><path d="M1788 1014Q1789 1019 1785 1022" stroke="#0a6fd6" stroke-width="2.600"/>
<rect x="1807.500" y="1004" width="8" height="15" rx="4" fill="#0a6fd6"/><path d="M1803.500 1013Q1803.500 1022 1811.500 1022Q1819.500 1022 1819.500 1013M1811.500 1022V1027" stroke="#0a6fd6" stroke-width="1.800"/>
<rect x="1833.500" y="1007" width="17.500" height="15" rx="2" fill="#0a6fd6"/><path d="M1836 1011.500H1849M1836 1015H1849M1840 1008.500V1015.500M1844.500 1008.500V1015.500M1838 1018.500H1847" stroke="#fff" stroke-width="1.200"/>
<circle cx="1871" cy="1010" r="5.500" fill="#0a6fd6"/><path d="M1863.500 1025V1021Q1863.500 1016 1869 1016H1873Q1878 1016 1878 1021V1025Z" fill="#0a6fd6"/>
<rect x="1870" y="1018" width="14" height="9" fill="#0a6fd6"/><path d="M1872 1020H1876V1025H1872M1872 1022.500H1876M1878 1020V1023H1882M1882 1020V1025" stroke="#fff" stroke-width="1"/>
<circle cx="1900.700" cy="1016.700" r="12.500" fill="#fbf6f2" stroke="#ece6e2"/>
<path d="M1890 1012Q1900 1006 1910 1008L1906 1016Q1899 1022 1892 1018Z" fill="#ee5a28"/><circle cx="1896" cy="1013" r="1.200" fill="#333"/><circle cx="1903" cy="1012" r="1.200" fill="#333"/>
<path d="M1913 1007L1914.500 1010.500L1918 1012L1914.500 1013.500L1913 1017L1911.500 1013.500L1908 1012L1911.500 1010.500Z" fill="#f7d544"/>
</svg>
</body></html>
